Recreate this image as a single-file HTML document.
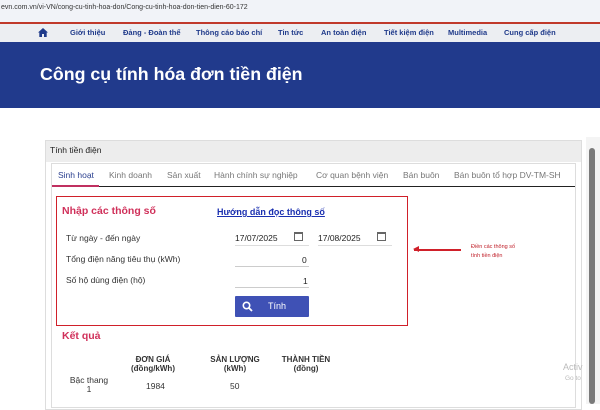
<!DOCTYPE html>
<html><head><meta charset="utf-8"><style>
*{margin:0;padding:0;box-sizing:border-box}
body{width:600px;height:404px;overflow:hidden;background:#fff;font-family:"Liberation Sans",Arial,sans-serif;position:relative}
.a{position:absolute;white-space:nowrap}
</style></head><body>
<div class="a" style="left:0;top:0;width:600px;height:22px;background:#f1f3f8"></div>
<div class="a" style="left:1px;top:4px;font-size:7px;color:#333">evn.com.vn/vi-VN/cong-cu-tinh-hoa-don/Cong-cu-tinh-hoa-don-tien-dien-60-172</div>
<div class="a" style="left:0;top:22px;width:600px;height:2px;background:#c0392b"></div>
<div class="a" style="left:0;top:24px;width:600px;height:18px;background:#eceef2"></div>
<svg class="a" style="left:38px;top:28px" width="10" height="9" viewBox="0 0 10 9"><path d="M5 0L0 4.5h1.3V9h2.7V6h2v3h2.7V4.5H10z" fill="#1f3a8a"/></svg>
<div class="a" style="top:28px;left:0;font-size:7.5px;font-weight:bold;color:#1f3a8a;width:600px">
<span class="a" style="left:70px">Giới thiệu</span><span class="a" style="left:123px">Đảng - Đoàn thể</span><span class="a" style="left:196px">Thông cáo báo chí</span><span class="a" style="left:278px">Tin tức</span><span class="a" style="left:321px">An toàn điện</span><span class="a" style="left:384px">Tiết kiệm điện</span><span class="a" style="left:448px">Multimedia</span><span class="a" style="left:504px">Cung cấp điện</span></div>
<div class="a" style="left:0;top:42px;width:600px;height:66px;background:#213a8c"></div>
<div class="a" style="left:40px;top:64px;font-size:17.8px;font-weight:bold;color:#fff">Công cụ tính hóa đơn tiền điện</div>
<div class="a" style="left:45px;top:140px;width:537px;height:270px;border:1px solid #ddd;background:#fff"></div>
<div class="a" style="left:46px;top:141px;width:535px;height:21px;background:#ededed"></div>
<div class="a" style="left:50px;top:145px;font-size:8.5px;color:#222">Tính tiền điện</div>
<div class="a" style="left:51px;top:163px;width:525px;height:245px;border:1px solid #ddd;background:#fff"></div>
<div class="a" style="left:52px;top:186px;width:523px;height:1px;background:#222"></div>
<div class="a" style="left:52px;top:185px;width:47px;height:2px;background:#c03060"></div>
<div class="a" style="top:170px;left:0;font-size:8.5px;color:#777">
<span class="a" style="left:58px;color:#2a3f8f">Sinh hoạt</span><span class="a" style="left:109px">Kinh doanh</span><span class="a" style="left:167px">Sản xuất</span><span class="a" style="left:214px">Hành chính sự nghiệp</span><span class="a" style="left:316px">Cơ quan bệnh viện</span><span class="a" style="left:403px">Bán buôn</span><span class="a" style="left:454px">Bán buôn tổ hợp DV-TM-SH</span></div>
<div class="a" style="left:56px;top:196px;width:352px;height:130px;border:1.5px solid #d0202a"></div>
<div class="a" style="left:62px;top:205px;font-size:10.5px;font-weight:bold;color:#d0305a">Nhập các thông số</div>
<div class="a" style="left:217px;top:207px;font-size:9px;font-weight:bold;color:#1a2fb0;text-decoration:underline">Hướng dẫn đọc thông số</div>
<div class="a" style="left:66px;top:233px;font-size:8.5px;color:#333">Từ ngày - đến ngày</div>
<div class="a" style="left:66px;top:254px;font-size:8.5px;color:#333">Tổng điện năng tiêu thụ (kWh)</div>
<div class="a" style="left:66px;top:275px;font-size:8.5px;color:#333">Số hộ dùng điện (hộ)</div>
<div class="a" style="left:235px;top:233px;font-size:8.5px;color:#222">17/07/2025</div>
<div class="a" style="left:318px;top:233px;font-size:8.5px;color:#222">17/08/2025</div>
<div class="a" style="left:294px;top:232px;width:9px;height:9px;border:1px solid #666;border-top-width:2px"></div>
<div class="a" style="left:377px;top:232px;width:9px;height:9px;border:1px solid #666;border-top-width:2px"></div>
<div class="a" style="left:235px;top:245px;width:74px;height:1px;background:#ddd"></div>
<div class="a" style="left:318px;top:245px;width:74px;height:1px;background:#ddd"></div>
<div class="a" style="left:302px;top:255px;font-size:8.5px;color:#222">0</div>
<div class="a" style="left:235px;top:266px;width:74px;height:1px;background:#ccc"></div>
<div class="a" style="left:303px;top:276px;font-size:8.5px;color:#222">1</div>
<div class="a" style="left:235px;top:287px;width:74px;height:1px;background:#ccc"></div>
<div class="a" style="left:235px;top:296px;width:74px;height:21px;background:#3f51b5;border-radius:1px"></div>
<svg class="a" style="left:242px;top:301px" width="11" height="11" viewBox="0 0 11 11"><circle cx="4.5" cy="4.5" r="3.2" fill="none" stroke="#fff" stroke-width="1.6"/><path d="M7 7l3 3" stroke="#fff" stroke-width="1.8"/></svg>
<div class="a" style="left:268px;top:301px;font-size:9px;color:#fff">Tính</div>
<div class="a" style="left:414px;top:249px;width:47px;height:1.5px;background:#d0202a"></div>
<div class="a" style="left:413px;top:246px;width:0;height:0;border-top:3.5px solid transparent;border-bottom:3.5px solid transparent;border-right:6px solid #d0202a"></div>
<div class="a" style="left:471px;top:243px;font-size:5.5px;color:#c0202a;line-height:9px">Điền các thông số<br>tính tiền điện</div>
<div class="a" style="left:62px;top:330px;font-size:10.5px;font-weight:bold;color:#d0305a">Kết quả</div>
<div class="a" style="top:355px;left:0;font-size:8px;font-weight:bold;color:#333;text-align:center;line-height:9px">
<span class="a" style="left:128px;width:50px">ĐƠN GIÁ<br>(đồng/kWh)</span><span class="a" style="left:200px;width:70px">SẢN LƯỢNG<br>(kWh)</span><span class="a" style="left:276px;width:60px">THÀNH TIỀN<br>(đồng)</span></div>
<div class="a" style="left:64px;top:376px;width:50px;font-size:8.5px;color:#333;text-align:center;line-height:9px">Bậc thang<br>1</div>
<div class="a" style="left:146px;top:381px;font-size:8.5px;color:#333">1984</div>
<div class="a" style="left:230px;top:381px;font-size:8.5px;color:#333">50</div>
<div class="a" style="left:563px;top:362px;font-size:9px;color:#bbb">Activ</div>
<div class="a" style="left:565px;top:375px;font-size:6.5px;color:#bbb">Go to</div>
<div class="a" style="left:586px;top:137px;width:14px;height:267px;background:#f4f4f4"></div>
<div class="a" style="left:589px;top:148px;width:6px;height:256px;background:#7a7a7a;border-radius:3px"></div>
</body></html>
